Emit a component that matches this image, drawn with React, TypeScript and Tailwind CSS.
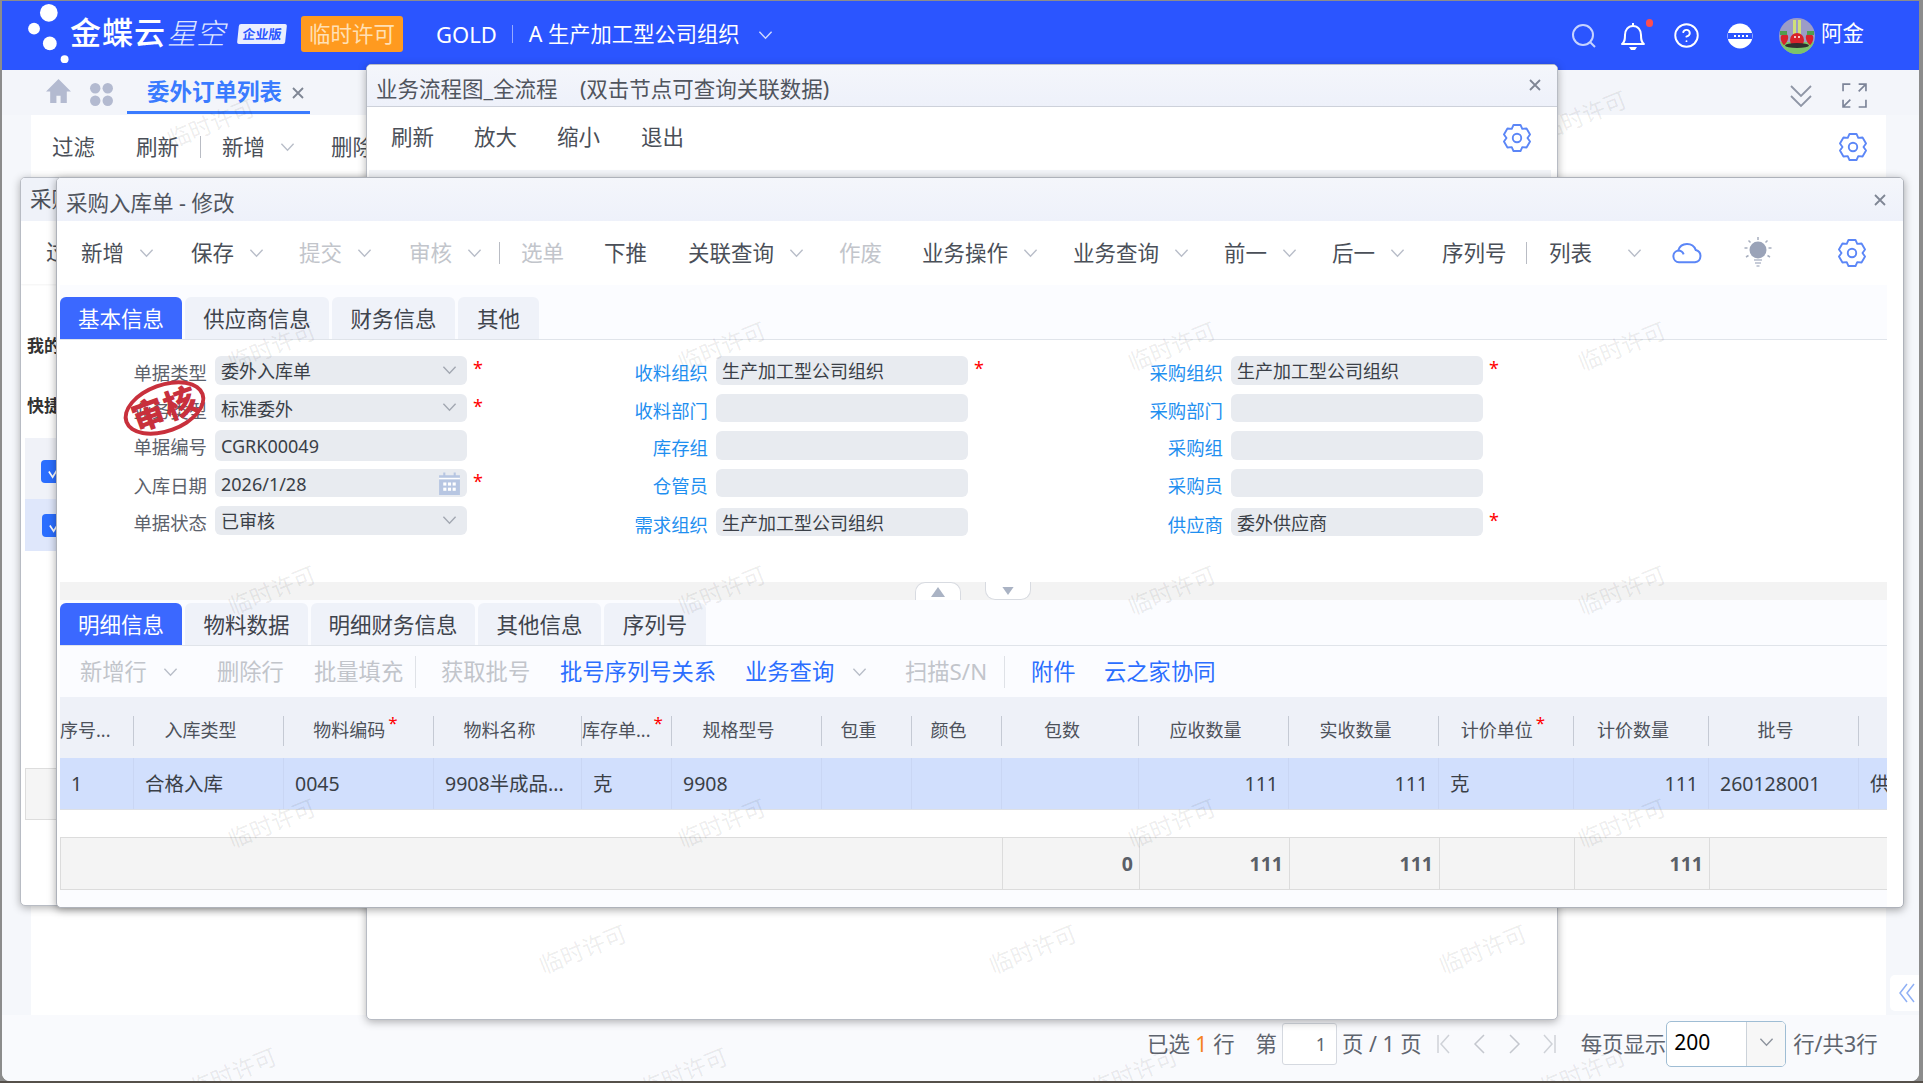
import { CircleHelp } from 'lucide-react';
import type { ReactNode } from 'react';

const gearPath = (() => {
  const pts: string[] = [];
  const at = (deg: number, r: number) => {
    const a = (deg * Math.PI) / 180;
    return `${(12 + r * Math.cos(a)).toFixed(2)} ${(12 + r * Math.sin(a)).toFixed(2)}`;
  };
  for (let k = 0; k < 6; k++) {
    const a = k * 60 - 90;
    pts.push(at(a - 15, 10.8), at(a + 15, 10.8), at(a + 30, 8.4));
  }
  return 'M' + pts.join('L') + 'Z';
})();

function Gear({ className = '' }: { className?: string }) {
  return (
    <svg viewBox="0 0 24 24" className={`w-[30px] h-[30px] ${className}`} fill="none" stroke="#5b86f7" strokeWidth="1.5" strokeLinejoin="round">
      <path d={gearPath} />
      <circle cx="12" cy="12" r="3.4" />
    </svg>
  );
}

function Caret({ className = '', color = '#b9bec9' }: { className?: string; color?: string }) {
  return (
    <svg viewBox="0 0 16 10" className={`w-[15px] h-[10px] shrink-0 ${className}`} fill="none" stroke={color} strokeWidth="1.5">
      <path d="M1.5 1.5 8 8.5l6.5-7" />
    </svg>
  );
}

function Close({ className = '' }: { className?: string }) {
  return (
    <svg viewBox="0 0 12 12" className={`w-[12px] h-[12px] ${className}`} stroke="#7f8694" strokeWidth="1.8">
      <path d="M1 1l10 10M11 1 1 11" />
    </svg>
  );
}

function Tool({ label, className = '', caretGap = 'ml-[15px]', caret = false, muted = false, blue = false }: { label: string; className?: string; caretGap?: string; caret?: boolean; muted?: boolean; blue?: boolean }) {
  return (
    <div className={`flex items-center shrink-0 ${className}`}>
      <span className={muted ? 'text-[#c2c5cb]' : blue ? 'text-[#2b6eff]' : 'text-[#4a4f58]'}>{label}</span>
      {caret && <Caret className={caretGap} />}
    </div>
  );
}

function Sep({ className = '' }: { className?: string }) {
  return <div className={`w-px h-[22px] bg-[#b9bcc4] shrink-0 ${className}`} />;
}

function TabItem({ label, width, active = false }: { label: string; width: string; active?: boolean }) {
  return (
    <div className={`h-full flex items-center justify-center rounded-t-[6px] pt-[2px] text-[21.5px] ${width} ${active ? 'bg-[#3b68ff] text-white' : 'bg-[#eff2f9] text-[#3f444d]'}`}>
      {label}
    </div>
  );
}

function Field({ label, value = '', blue = false, star = false, select = false, date = false, className = '', labelW = 'w-[147px]', gap = 'ml-[8px]' }: { label: string; value?: string; blue?: boolean; star?: boolean; select?: boolean; date?: boolean; className?: string; labelW?: string; gap?: string }) {
  return (
    <div className={`flex ${className}`}>
      <div className={`${labelW} text-right text-[18.4px] leading-none pt-[8px] ${blue ? 'text-[#1f8ff0]' : 'text-[#5c626c]'}`}>{label}</div>
      <div className={`${gap} w-[252px] h-full bg-[#e8ebf0] rounded-[6px] flex items-center justify-between pl-[6px] pr-[10px] pt-[2px] text-[18px] text-[#3a3f47]`}>
        <span>{value}</span>
        {select && <Caret color="#a3a8b2" className="mt-[-4px]" />}
        {date && (
          <svg viewBox="0 0 24 24" className="w-[25px] h-[25px] mr-[-5px] mt-[-2px]" fill="#b7c6e2">
            <path d="M2 4h4V1.5h2V4h8V1.5h2V4h4v19H2z" />
            <g fill="#fff">
              <rect x="2" y="6.5" width="20" height="1.5" />
              <rect x="6" y="11" width="3" height="3" />
              <rect x="10.5" y="11" width="3" height="3" />
              <rect x="15" y="11" width="3" height="3" />
              <rect x="6" y="16" width="3" height="3" />
              <rect x="10.5" y="16" width="3" height="3" />
              <rect x="15" y="16" width="3" height="3" />
            </g>
          </svg>
        )}
      </div>
      {star && <span className="ml-[6px] text-[#f00] text-[18px] leading-none pt-[3px]">*</span>}
    </div>
  );
}

function HeadCell({ children, last = false, star = false, className = 'pr-[16px]' }: { children: ReactNode; last?: boolean; star?: boolean; className?: string }) {
  return (
    <div className={`h-[30px] flex items-center justify-center whitespace-nowrap overflow-visible ${last ? '' : 'border-r border-[#c5cad4]'} ${className}`}>
      <span>{children}</span>
      {star && <span className="text-[#f00] text-[17px] leading-none self-start ml-[3px] mt-[-2px]">*</span>}
    </div>
  );
}

const tableCols = 'grid-cols-[74px_150px_150px_148px_90px_150px_90px_90px_137px_150px_150px_135px_135px_150px_29px]';

function RowCell({ children, right = false, className = '' }: { children?: ReactNode; right?: boolean; className?: string }) {
  return (
    <div className={`h-full flex items-center whitespace-nowrap overflow-hidden border-r border-[#c9d6f4] ${right ? 'justify-end pr-[10px]' : 'pl-[11px]'} ${className}`}>
      {children}
    </div>
  );
}

function FootCell({ children, className = '' }: { children?: ReactNode; className?: string }) {
  return <div className={`h-full flex items-center justify-end pr-[6px] border-l border-[#dcdcdc] font-bold text-[#5a5f68] ${className}`}>{children}</div>;
}

function Mark({ className }: { className: string }) {
  return <div className={`absolute -rotate-[22deg] text-[23px] leading-none text-black/[.08] whitespace-nowrap pointer-events-none ${className}`}>临时许可</div>;
}

function Logo() {
  return (
    <svg viewBox="0 0 70 70" className="w-[70px] h-[69px] shrink-0 mt-[4px]" fill="#fff">
      <circle cx="47" cy="12" r="9" />
      <circle cx="32" cy="28" r="6" />
      <circle cx="48" cy="43" r="7" />
      <circle cx="63" cy="59" r="4" />
    </svg>
  );
}

function Avatar() {
  return (
    <svg viewBox="0 0 36 36" className="w-[36px] h-[36px] shrink-0">
      <defs>
        <clipPath id="av">
          <circle cx="18" cy="18" r="18" />
        </clipPath>
      </defs>
      <g clipPath="url(#av)">
        <rect width="36" height="36" fill="#9c9cc6" />
        <rect x="14" y="2" width="3" height="15" fill="#cfe07a" />
        <rect x="19" y="2" width="3" height="15" fill="#cfe07a" />
        <path d="M0 24h36v12H0z" fill="#7cc46a" />
        <ellipse cx="18" cy="22" rx="7" ry="7" fill="#d8222c" />
        <ellipse cx="18" cy="27.500" rx="12" ry="2.500" fill="#2f2f2f" />
        <path d="M2 18c2-3 6-3 7 0s-2 8-4 9c-2-1-4-6-3-9z" fill="#d8222c" />
        <path d="M34 18c-2-3-6-3-7 0s2 8 4 9c2-1 4-6 3-9z" fill="#d8222c" />
        <rect x="1" y="13" width="7" height="4" fill="#4f9e4f" />
        <rect x="28" y="13" width="7" height="4" fill="#4f9e4f" />
        <circle cx="16" cy="19" r="1" fill="#fff" />
        <circle cx="20" cy="19" r="1" fill="#fff" />
      </g>
    </svg>
  );
}

function Header() {
  return (
    <header className="h-[69px] shrink-0 bg-[#2b55ff] flex items-center text-white relative pb-[4px]">
      <Logo />
      <span className="text-[31px] font-medium tracking-[1px] leading-none ml-[-2px] mt-[-2px]">金蝶云</span>
      <span className="text-[29px] font-light italic text-[#dfe6ff] leading-none ml-[1px] mt-[-2px]">星空</span>
      <span className="ml-[13px] w-[48px] h-[20px] bg-white/90 -skew-x-6 rounded-[2px] text-[#2b55ff] text-[13px] font-bold flex items-center justify-center leading-none">企业版</span>
      <span className="ml-[15px] w-[102px] h-[36px] bg-[#ff9a1f] rounded-[3px] text-[#ffe0b5] text-[21.5px] flex items-center justify-center leading-none">临时许可</span>
      <span className="ml-[33px] text-[22px] leading-none">GOLD</span>
      <div className="ml-[15px] w-px h-[18px] bg-white/50" />
      <span className="ml-[16px] text-[21.3px] leading-none">A 生产加工型公司组织</span>
      <Caret color="#cfd9ff" className="ml-[18px] mt-[3px]" />
      <div className="ml-auto flex items-center pr-[55px] mt-[4px]">
        <svg viewBox="0 0 26 26" className="w-[26px] h-[26px]" fill="none" stroke="#c6d3ff" strokeWidth="2">
          <circle cx="12" cy="12" r="10" />
          <path d="M19 19l5 5" />
        </svg>
        <svg viewBox="0 0 26 30" className="ml-[23px] w-[26px] h-[30px]" fill="none" stroke="#fff" strokeWidth="2" strokeLinejoin="round">
          <path d="M2 23c3-2 3-5 3-9 0-5 3-9 8-9s8 4 8 9c0 4 0 7 3 9z" />
          <path d="M13 5V2" />
          <path d="M9 26h8l-2 3h-4z" fill="#fff" stroke="none" />
        </svg>
        <CircleHelp className="ml-[27px] w-[27px] h-[27px] text-white" strokeWidth={1.7} />
        <svg viewBox="0 0 26 26" className="ml-[27px] w-[26px] h-[26px]">
          <circle cx="13" cy="13" r="12.500" fill="#fff" />
          <rect x="1" y="10" width="24" height="6" fill="#2b55ff" />
          <g fill="#fff">
            <rect x="7" y="12" width="2" height="2" />
            <rect x="11" y="12" width="2" height="2" />
            <rect x="15" y="12" width="2" height="2" />
            <rect x="19" y="12" width="2" height="2" />
          </g>
        </svg>
        <div className="ml-[26px]">
          <Avatar />
        </div>
        <span className="ml-[6px] text-[21.5px] leading-none mt-[-6px]">阿金</span>
      </div>
      <span className="absolute left-[1644px] top-[18px] w-[7px] h-[8px] rounded-full bg-[#ff4d4f]" />
    </header>
  );
}

function TabBar() {
  return (
    <div className="h-[45px] shrink-0 bg-[#f3f5fa] flex items-center">
      <svg viewBox="0 0 26 25" className="ml-[43px] w-[27px] h-[26px] mt-[-3px]" fill="#b3bad0">
        <path d="M13 1 1 13h4v11h6v-7h4v7h6V13h4z" />
      </svg>
      <svg viewBox="0 0 24 24" className="ml-[17px] w-[25px] h-[25px] mt-[3px]" fill="#b3bad0">
        <rect x="1" y="1" width="10" height="10" rx="5" />
        <rect x="13" y="1" width="10" height="10" rx="5" />
        <rect x="1" y="13" width="10" height="10" rx="5" />
        <rect x="13" y="13" width="10" height="10" rx="5" />
      </svg>
      <div className="ml-[13px] w-[183px] h-full flex items-center pl-[20px] relative">
        <span className="text-[22.5px] font-bold text-[#3a7bff] leading-none mt-[-1px]">委外订单列表</span>
        <Close className="ml-[10px] mt-[1px]" />
        <span className="absolute left-0 right-0 bottom-[1px] h-[3px] bg-[#3a7bff]" />
      </div>
      <div className="ml-auto flex items-center pr-[52px]">
        <svg viewBox="0 0 24 24" className="w-[24px] h-[26px] mt-[6px]" fill="none" stroke="#8f96a6" strokeWidth="1.8">
          <path d="M2 2l10 10L22 2M2 12l10 10 10-10" />
        </svg>
        <svg viewBox="0 0 24 24" className="ml-[29px] w-[25px] h-[25px] mt-[6px]" fill="none" stroke="#7c8498" strokeWidth="1.6">
          <path d="M1 8V1h7M16 23h7v-7M16 1h7v7M23 1l-7 7M8 23H1v-7M1 23l7-7" />
        </svg>
      </div>
    </div>
  );
}

function ListBody() {
  return (
    <div className="flex-1 bg-[#f5f7fb] pl-[29px] pr-[33px]">
      <div className="h-full bg-white flex items-start text-[21.5px] pt-[16px]">
        <div className="flex items-center h-[32px] w-full">
          <Tool label="过滤" className="ml-[21px] w-[84px]" />
          <Tool label="刷新" className="w-[64px]" />
          <Sep />
          <Tool label="新增" className="ml-[21px] w-[109px]" caret caretGap="ml-[15px]" />
          <Tool label="删除" />
          <Gear className="ml-auto mr-[18px]" />
        </div>
      </div>
    </div>
  );
}

function Pagination() {
  return (
    <div className="h-[66px] shrink-0 bg-[#f9fafd] flex items-center pl-[1145px] pb-[8px] text-[21.4px] text-[#5e646e] leading-none">
      <span className="whitespace-pre">已选 <span className="text-[#f5821f]">1</span> 行</span>
      <span className="ml-[21px]">第</span>
      <div className="ml-[5px] w-[55px] h-[42px] border border-[#d5d9e0] rounded-[3px] bg-white flex items-center justify-end pr-[10px] text-[18px]">1</div>
      <span className="ml-[5px] whitespace-pre">页 / 1 页</span>
      <div className="ml-[15px] flex items-center">
        <svg viewBox="0 0 14 20" className="w-[14px] h-[20px]" fill="none" stroke="#cfd2d8" strokeWidth="1.5">
          <path d="M1 1v18M12 1 4 10l8 9" />
        </svg>
        <svg viewBox="0 0 12 20" className="ml-[22px] w-[12px] h-[20px]" fill="none" stroke="#c4c7ce" strokeWidth="1.5">
          <path d="M11 1 2 10l9 9" />
        </svg>
        <svg viewBox="0 0 12 20" className="ml-[24px] w-[12px] h-[20px]" fill="none" stroke="#c4c7ce" strokeWidth="1.5">
          <path d="M1 1l9 9-9 9" />
        </svg>
        <svg viewBox="0 0 14 20" className="ml-[21px] w-[14px] h-[20px]" fill="none" stroke="#cfd2d8" strokeWidth="1.5">
          <path d="M13 1v18M2 1l8 9-8 9" />
        </svg>
      </div>
      <span className="ml-[25px]">每页显示</span>
      <div className="w-[120px] h-[46px] border border-[#9fbdd4] rounded-[5px] bg-white flex overflow-hidden">
        <div className="flex-1 pl-[7px] flex items-center text-[21px] text-black leading-none pb-[4px]">200</div>
        <div className="w-[39px] border-l border-[#ccd3da] bg-[#f7f7f7] flex items-center justify-center pb-[4px]">
          <Caret color="#8e949e" />
        </div>
      </div>
      <span className="ml-[7px]">行/共3行</span>
    </div>
  );
}

function TitleBar({ title, h, closeClass = '' }: { title: string; h: string; closeClass?: string }) {
  return (
    <div className={`${h} shrink-0 flex items-center justify-between bg-gradient-to-b from-[#f4f6fb] to-[#eef1fa] text-[21.5px] text-[#50555e]`}>
      <span className="leading-none mt-[6px] whitespace-pre">{title}</span>
      <Close className={closeClass} />
    </div>
  );
}

function ListWindow() {
  return (
    <div className="absolute left-[20px] top-[177px] w-[400px] h-[729px] bg-white rounded-[5px] border border-[#b8bcc4] shadow-[0_2px_8px_rgba(0,0,0,0.3)] flex flex-col overflow-hidden text-[#4a4f58]">
      <div className="h-[43px] shrink-0 bg-[#eff2f9] flex items-center pl-[9px] text-[21.5px]">采购入库单</div>
      <div className="h-[63px] shrink-0 flex items-center pl-[25px] text-[21.5px] shadow-[0_1px_2px_rgba(0,0,0,0.05)]">过滤</div>
      <div className="pl-[6px] pt-[53px] text-[17px] font-bold text-[#333] leading-none">我的方案</div>
      <div className="pl-[6px] pt-[43px] text-[17px] font-bold text-[#333] leading-none">快捷过滤</div>
      <div className="ml-[4px] mt-[24px] h-[61px] bg-[#f0f2f8] flex items-center pl-[16px] pt-[5px]">
        <Checkbox />
      </div>
      <div className="ml-[4px] h-[52px] bg-[#dfe7fb] flex items-center pl-[17px]">
        <Checkbox />
      </div>
      <div className="ml-[4px] mt-[217px] h-[52px] bg-[#f5f5f5] border border-[#ddd]" />
    </div>
  );
}

function Checkbox() {
  return (
    <div className="w-[26px] h-[23px] bg-[#2b6eff] rounded-[4px] flex items-center justify-center">
      <svg viewBox="0 0 16 16" className="w-[15px] h-[15px]" fill="none" stroke="#fff" strokeWidth="1.8">
        <path d="M2 8l4 6L14 1" />
      </svg>
    </div>
  );
}

function FlowWindow() {
  return (
    <div className="absolute left-[366px] top-[64px] w-[1192px] h-[956px] bg-white rounded-[5px] border border-[#b8bcc4] shadow-[0_2px_8px_rgba(0,0,0,0.3)] flex flex-col overflow-hidden">
      <div className="border-b border-[#cdd1da]">
        <TitleBar title="业务流程图_全流程    (双击节点可查询关联数据)" h="h-[41px] pl-[9px] pr-[16px]" closeClass="mt-[-2px]" />
      </div>
      <div className="h-[63px] shrink-0 flex items-center pl-[24px] pb-[2px] text-[21.5px]">
        <Tool label="刷新" className="w-[83px]" />
        <Tool label="放大" className="w-[83px]" />
        <Tool label="缩小" className="w-[84px]" />
        <Tool label="退出" />
        <Gear className="ml-auto mr-[25px]" />
      </div>
      <div className="mx-[2px] mr-[6px] h-[10px] bg-[#f2f4f8]" />
    </div>
  );
}

function EditWindow() {
  return (
    <div className="absolute left-[56px] top-[177px] w-[1848px] h-[731px] bg-white rounded-[5px] border border-[#aeb2ba] shadow-[0_2px_8px_rgba(0,0,0,0.35)] flex flex-col overflow-hidden">
      <TitleBar title="采购入库单 - 修改" h="h-[43px] pl-[9px] pr-[17px]" />
      <div className="h-[64px] shrink-0 flex items-center pl-[24px] text-[21.5px]">
        <Tool label="新增" className="w-[110px]" caret />
        <Tool label="保存" className="w-[108px]" caret />
        <Tool label="提交" className="w-[110px]" caret muted />
        <Tool label="审核" className="w-[90px]" caret muted />
        <Sep />
        <Tool label="选单" className="ml-[21px] w-[83px]" muted />
        <Tool label="下推" className="w-[84px]" />
        <Tool label="关联查询" className="w-[151px]" caret />
        <Tool label="作废" className="w-[83px]" muted />
        <Tool label="业务操作" className="w-[151px]" caret />
        <Tool label="业务查询" className="w-[151px]" caret />
        <Tool label="前一" className="w-[108px]" caret />
        <Tool label="后一" className="w-[110px]" caret />
        <Tool label="序列号" className="w-[84px]" />
        <Sep />
        <Tool label="列表" className="ml-[22px] w-[122px]" caret caretGap="ml-[35px]" />
        <svg viewBox="0 0 24 24" className="w-[32px] h-[32px] shrink-0" fill="none" stroke="#5b86f7" strokeWidth="1.5">
          <path d="M6 19a4.500 4.500 0 0 1-.6-8.900A7 7 0 0 1 18.600 9.800 4.700 4.700 0 0 1 18 19H6Z" />
          <path d="M5.400 10.100a4.500 4.500 0 0 1 4.100 2.900" />
        </svg>
        <svg viewBox="0 0 30 34" className="ml-[40px] w-[30px] h-[34px] shrink-0">
          <circle cx="15" cy="14" r="8.500" fill="#9aa3b8" />
          <path d="M11 24h8M12 27h6M13.500 30h3" stroke="#b5bccb" strokeWidth="1.5" />
          <path d="M15 1v3M5.500 4.500l2 2M24.500 4.500l-2 2M1.500 12h3M25.500 12h3M3 21l2.500-1.500M27 21l-2.500-1.500" stroke="#a7aebe" strokeWidth="1.5" />
        </svg>
        <Gear className="ml-[64px]" />
      </div>
      <div className="flex-1 mx-[3px] mr-[16px] bg-[#fbfcff] flex flex-col text-[19.5px] text-[#3a3f47]">
        <div className="h-[55px] shrink-0 pt-[12px] flex gap-[3px] border-b border-[#e0e4ea]">
          <TabItem label="基本信息" width="w-[122px]" active />
          <TabItem label="供应商信息" width="w-[144px]" />
          <TabItem label="财务信息" width="w-[123px]" />
          <TabItem label="其他" width="w-[81px]" />
        </div>
        <div className="h-[242px] shrink-0 bg-white flex relative">
          <div className="w-[500px] flex flex-col">
            <Field label="单据类型" value="委外入库单" star select className="mt-[16px] h-[29px]" />
            <Field label="业务类型" value="标准委外" star select className="mt-[9px] h-[28px]" />
            <Field label="单据编号" value="CGRK00049" className="mt-[8px] h-[31px]" />
            <Field label="入库日期" value="2026/1/28" star date className="mt-[8px] h-[28px]" />
            <Field label="单据状态" value="已审核" select className="mt-[9px] h-[29px]" />
          </div>
          <div className="w-[515px] flex flex-col">
            <Field blue label="收料组织" value="生产加工型公司组织" star className="mt-[16px] h-[29px]" labelW="w-[148px]" />
            <Field blue label="收料部门" className="mt-[9px] h-[28px]" labelW="w-[148px]" />
            <Field blue label="库存组" className="mt-[9px] h-[29px]" labelW="w-[148px]" />
            <Field blue label="仓管员" className="mt-[9px] h-[28px]" labelW="w-[148px]" />
            <Field blue label="需求组织" value="生产加工型公司组织" className="mt-[11px] h-[28px]" labelW="w-[148px]" />
          </div>
          <div className="flex flex-col">
            <Field blue label="采购组织" value="生产加工型公司组织" star className="mt-[16px] h-[29px]" labelW="w-[148px]" />
            <Field blue label="采购部门" className="mt-[9px] h-[28px]" labelW="w-[148px]" />
            <Field blue label="采购组" className="mt-[9px] h-[29px]" labelW="w-[148px]" />
            <Field blue label="采购员" className="mt-[9px] h-[28px]" labelW="w-[148px]" />
            <Field blue label="供应商" value="委外供应商" star className="mt-[11px] h-[28px]" labelW="w-[148px]" />
          </div>
          <div className="absolute left-[62px] top-[43px] w-[85px] h-[50px] rounded-[50%] border-[4px] border-[#c8303c] -rotate-[20deg] flex items-center justify-center text-[33px] font-black text-[#c8303c] leading-none tracking-[1px] whitespace-nowrap">审核</div>
        </div>
        <div className="h-[18px] shrink-0 bg-[#f3f3f3] flex pl-[855px]">
          <div className="w-[46px] h-full bg-white border border-b-0 border-[#d8dbe1] rounded-t-[10px] flex items-center justify-center">
            <svg viewBox="0 0 14 10" className="w-[14px] h-[10px]" fill="#aab3c4">
              <path d="M7 0l7 10H0z" />
            </svg>
          </div>
          <div className="ml-[24px] w-[46px] h-full bg-white border border-t-0 border-[#d8dbe1] rounded-b-[10px] flex items-center justify-center">
            <svg viewBox="0 0 14 10" className="w-[14px] h-[8px]" fill="#aab3c4">
              <path d="M7 10 14 0H0z" />
            </svg>
          </div>
        </div>
        <div className="h-[46px] shrink-0 pt-[3px] flex gap-[3px] border-b border-[#e0e4ea]">
          <TabItem label="明细信息" width="w-[122px]" active />
          <TabItem label="物料数据" width="w-[123px]" />
          <TabItem label="明细财务信息" width="w-[164px]" />
          <TabItem label="其他信息" width="w-[123px]" />
          <TabItem label="序列号" width="w-[102px]" />
        </div>
        <div className="h-[51px] shrink-0 flex items-center pl-[20px] text-[22.3px]">
          <Tool label="新增行" className="w-[137px]" caret caretGap="ml-[16px]" muted />
          <Tool label="删除行" className="w-[97px]" muted />
          <Tool label="批量填充" className="w-[101px]" muted />
          <Sep className="h-[32px] bg-[#dfe2e7]" />
          <Tool label="获取批号" className="ml-[25px] w-[119px]" muted />
          <Tool label="批号序列号关系" className="w-[185px]" blue />
          <Tool label="业务查询" className="w-[160px]" caret caretGap="ml-[18px]" blue />
          <Tool label="扫描S/N" className="w-[99px]" muted />
          <Sep className="h-[32px] bg-[#dfe2e7]" />
          <Tool label="附件" className="ml-[26px] w-[73px]" blue />
          <Tool label="云之家协同" blue />
        </div>
        <div className={`h-[61px] shrink-0 bg-[#eef1f8] grid items-center overflow-hidden pt-[6px] text-[18px] text-[#4d525b] ${tableCols}`}>
          <HeadCell className="justify-start">序号...</HeadCell>
          <HeadCell>入库类型</HeadCell>
          <HeadCell star className="pr-[6px]">物料编码</HeadCell>
          <HeadCell>物料名称</HeadCell>
          <HeadCell star className="justify-start">库存单...</HeadCell>
          <HeadCell>规格型号</HeadCell>
          <HeadCell>包重</HeadCell>
          <HeadCell>颜色</HeadCell>
          <HeadCell>包数</HeadCell>
          <HeadCell>应收数量</HeadCell>
          <HeadCell>实收数量</HeadCell>
          <HeadCell star className="pr-[6px]">计价单位</HeadCell>
          <HeadCell>计价数量</HeadCell>
          <HeadCell>批号</HeadCell>
          <HeadCell last> </HeadCell>
        </div>
        <div className={`h-[52px] shrink-0 bg-[#d1dffd] grid overflow-hidden border-b border-[#dde0e6] ${tableCols}`}>
          <RowCell>1</RowCell>
          <RowCell>合格入库</RowCell>
          <RowCell>0045</RowCell>
          <RowCell>9908半成品...</RowCell>
          <RowCell>克</RowCell>
          <RowCell>9908</RowCell>
          <RowCell />
          <RowCell />
          <RowCell />
          <RowCell right>111</RowCell>
          <RowCell right>111</RowCell>
          <RowCell>克</RowCell>
          <RowCell right>111</RowCell>
          <RowCell>260128001</RowCell>
          <RowCell className="border-r-0">供应商</RowCell>
        </div>
        <div className="h-[27px] shrink-0 bg-white" />
        <div className="h-[53px] shrink-0 bg-[#f4f4f4] grid border-y border-x-0 border-[#dcdcdc] grid-cols-[942px_137px_150px_150px_135px_135px_176px]">
          <div className="border-l border-[#dcdcdc]" />
          <FootCell>0</FootCell>
          <FootCell>111</FootCell>
          <FootCell>111</FootCell>
          <FootCell />
          <FootCell>111</FootCell>
          <FootCell />
        </div>
      </div>
    </div>
  );
}

export default function App() {
  return (
    <div className="relative w-[1923px] h-[1083px] overflow-hidden bg-[#8c8c8c] font-['Noto_Sans','Noto_Sans_CJK_SC',sans-serif]">
      <div className="relative ml-[2px] mr-[4px] mt-px mb-[2px] h-[1080px] flex flex-col rounded-b-[8px] overflow-hidden bg-white">
        <Header />
        <TabBar />
        <ListBody />
        <Pagination />
        <div className="absolute right-0 top-[974px] w-[29px] h-[36px] bg-white rounded-l-[5px] flex items-center justify-center pl-[4px]">
          <svg viewBox="0 0 18 20" className="w-[18px] h-[20px]" fill="none" stroke="#8fb0f5" strokeWidth="1.5">
            <path d="M9 1 2 10l7 9M16 1l-7 9 7 9" />
          </svg>
        </div>
      </div>
      <Mark className="left-[165px] top-[112px]" />
      <Mark className="left-[1537px] top-[104px]" />
      <ListWindow />
      <FlowWindow />
      <EditWindow />
      <Mark className="left-[226px] top-[335px]" />
      <Mark className="left-[676px] top-[335px]" />
      <Mark className="left-[1126px] top-[335px]" />
      <Mark className="left-[1576px] top-[335px]" />
      <Mark className="left-[226px] top-[579px]" />
      <Mark className="left-[676px] top-[579px]" />
      <Mark className="left-[1126px] top-[579px]" />
      <Mark className="left-[1576px] top-[579px]" />
      <Mark className="left-[226px] top-[812px]" />
      <Mark className="left-[676px] top-[812px]" />
      <Mark className="left-[1126px] top-[812px]" />
      <Mark className="left-[1576px] top-[812px]" />
      <Mark className="left-[537px] top-[938px]" />
      <Mark className="left-[987px] top-[938px]" />
      <Mark className="left-[1437px] top-[938px]" />
      <Mark className="left-[187px] top-[1061px]" />
      <Mark className="left-[638px] top-[1061px]" />
      <Mark className="left-[1088px] top-[1061px]" />
      <Mark className="left-[1536px] top-[1061px]" />
      <div className="absolute left-0 right-0 bottom-0 h-[2px] bg-[#55504a]" />
    </div>
  );
}
